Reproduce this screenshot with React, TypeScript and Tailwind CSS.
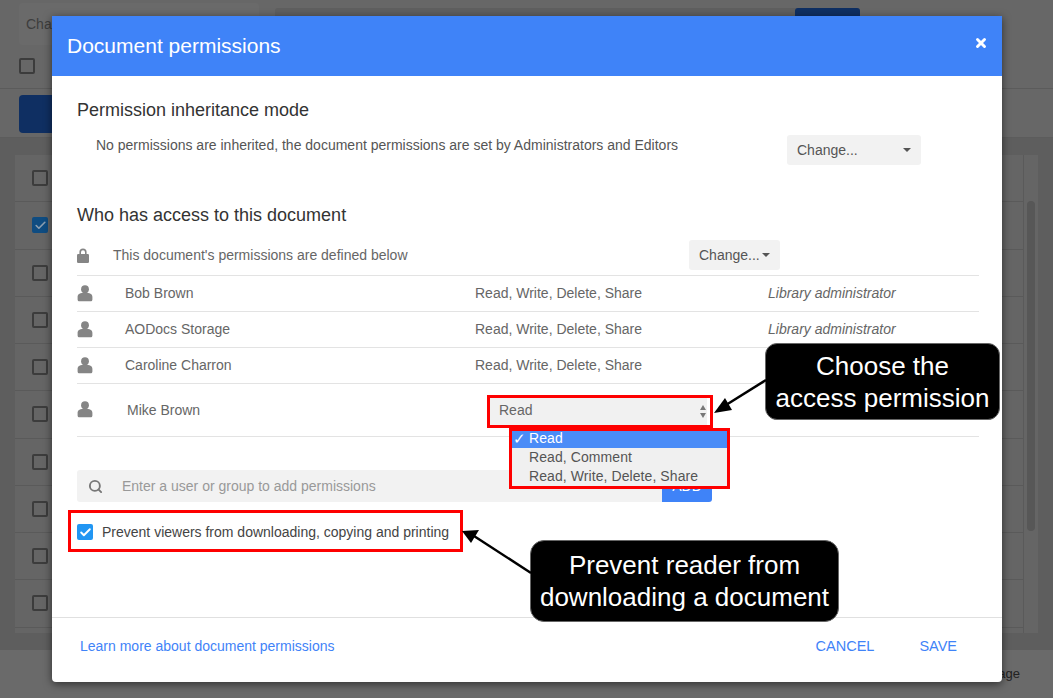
import { Check, Search, X } from "lucide-react";

const FONT = "font-['Liberation_Sans',Arial,sans-serif]";

// ─── data ─────────────────────────────────────────────────────────────────────

const people = [
  { name: "Bob Brown", perms: "Read, Write, Delete, Share", role: "Library administrator" },
  { name: "AODocs Storage", perms: "Read, Write, Delete, Share", role: "Library administrator" },
  { name: "Caroline Charron", perms: "Read, Write, Delete, Share", role: "" },
];

const backgroundRows = [false, true, false, false, false, false, false, false, false, false];

// ─── small pieces ─────────────────────────────────────────────────────────────

function Caret() {
  return <span className="h-0 w-0 border-x-[4px] border-t-[4px] border-x-transparent border-t-[#555]" />;
}

function PersonIcon() {
  return (
    <svg width="16" height="17" viewBox="0 0 16 17" className="shrink-0 fill-[#858585]">
      <circle cx="8" cy="4.2" r="3.9" />
      <path d="M0.6 12c0-3 2.6-4.3 7.4-4.3s7.4 1.3 7.4 4.3v2.4c0 1.2-.8 1.9-2 1.9H2.6c-1.2 0-2-.7-2-1.9z" />
    </svg>
  );
}

function LockIcon() {
  return (
    <svg width="12" height="15" viewBox="0 0 12 15" className="fill-[#858585]">
      <path d="M2.4 6.5V4.1a3.6 3.6 0 0 1 7.2 0v2.4H8V4.2a2 2 0 0 0-4 0v2.3z" />
      <rect x="0" y="6" width="12" height="9" rx="1.2" />
    </svg>
  );
}

function BgCheckbox({ checked }: { checked?: boolean }) {
  return checked ? (
    <span className="flex h-4 w-4 items-center justify-center rounded-[2px] bg-[#0f4c81]">
      <Check size={13} strokeWidth={3} className="text-[#8d9fb0]" />
    </span>
  ) : (
    <span className="block h-4 w-4 rounded-[2px] border-2 border-[#3c3c3c]" />
  );
}

// ─── dimmed page behind the dialog ────────────────────────────────────────────

function Background() {
  return (
    <div className="flex h-[698px] flex-col bg-[#676767]">
      <div className="h-[138px] shrink-0 border-b border-[#5c5c5c]">
        <div className="flex h-[89px] flex-col border-b border-[#5b5b5b] pl-[19px]">
          <div className="mt-[3px] flex items-start gap-[16px]">
            <div className="flex h-[42px] w-[240px] items-center rounded-[3px] bg-[#6a6a6a] pl-[7px] text-[14px] text-[#3d3d3d]">
              Change
            </div>
            <div className="mt-[5px] flex h-[37px] w-[585px] justify-end rounded-[3px] bg-[#5f5f5f]">
              <span className="h-[37px] w-[65px] rounded-[3px] bg-[#0f2f62]" />
            </div>
          </div>
          <div className="mt-[13px]">
            <BgCheckbox />
          </div>
        </div>
        <div className="mt-[6px] ml-[19px] h-[38px] w-[80px] rounded-[4px] bg-[#0f2f62]" />
      </div>
      <div className="flex-1 bg-[#5e5e5e] px-[15px] pt-[17px]">
        <div className="flex h-[478px] overflow-hidden bg-[#656565]">
          <div className="flex-1">
            {backgroundRows.map((checked, i) => (
              <div key={i} className="flex h-[47.25px] items-center border-b border-[#5a5a5a] pl-[17px]">
                <BgCheckbox checked={checked} />
              </div>
            ))}
          </div>
          <div className="w-[15px] border-l border-[#5a5a5a] pt-[46px]">
            <div className="mx-auto h-[330px] w-[8px] rounded-full bg-[#575757]" />
          </div>
        </div>
      </div>
      <div className="flex h-[48px] shrink-0 items-center justify-end bg-[#6a6a6a] pr-[33px] text-[13px] text-[#222]">
        age
      </div>
    </div>
  );
}

// ─── dialog ───────────────────────────────────────────────────────────────────

function Dialog() {
  return (
    <div className="absolute top-[16px] left-[52px] flex h-[666px] w-[950px] flex-col rounded-b-[4px] bg-white shadow-[0_2px_8px_rgba(0,0,0,0.55)]">
      <div className="flex h-[60px] shrink-0 items-center justify-between bg-[#3f83f8] pr-[14px] pl-[15px] text-white">
        <span className="text-[21px]">Document permissions</span>
        <X size={14} strokeWidth={5} className="mb-[6px]" />
      </div>

      <div className="flex-1 pr-[23px] pl-[25px]">
        <h2 className="mt-[23px] text-[18px] leading-[22px] text-[#333]">Permission inheritance mode</h2>
        <div className="mt-[14px] flex items-start">
          <p className="ml-[19px] w-[691px] text-[14px] leading-[20px] text-[#555]">
            No permissions are inherited, the document permissions are set by Administrators and Editors
          </p>
          <button className="flex h-[30px] w-[134px] items-center justify-between rounded-[3px] bg-[#f2f2f2] pr-[10px] pl-[10px] text-[14px] text-[#555]">
            Change...
            <Caret />
          </button>
        </div>

        <h2 className="mt-[39px] text-[18px] leading-[22px] text-[#333]">Who has access to this document</h2>

        <div className="mt-[14px] flex h-[36px] items-start border-b border-[#e3e3e3]">
          <div className="flex h-[30px] w-[36px] items-center">
            <LockIcon />
          </div>
          <span className="flex h-[30px] w-[576px] items-center text-[14px] text-[#666]">
            This document's permissions are defined below
          </span>
          <button className="flex h-[30px] w-[91px] items-center justify-between rounded-[3px] bg-[#f2f2f2] pr-[10px] pl-[10px] text-[14px] text-[#555]">
            Change...
            <Caret />
          </button>
        </div>

        {people.map((p) => (
          <div key={p.name} className="flex h-[36px] items-center border-b border-[#e3e3e3] text-[14px] text-[#666]">
            <span className="w-[48px]">
              <PersonIcon />
            </span>
            <span className="w-[350px]">{p.name}</span>
            <span className="w-[293px]">{p.perms}</span>
            <span className="italic">{p.role}</span>
          </div>
        ))}

        <div className="relative flex h-[53px] items-center border-b border-[#e3e3e3] text-[14px] text-[#666]">
          <span className="mb-[2px] w-[50px]">
            <PersonIcon />
          </span>
          <span className="w-[360px]">Mike Brown</span>
          <div className="mt-[2px] flex h-[27px] w-[220px] items-center justify-between bg-[#f1f1f1] pr-[1px] pl-[12px] text-[#666]">
            <span className="-mt-[2px]">Read</span>
            <span className="flex flex-col gap-[3px]">
              <span className="h-0 w-0 border-x-[3.5px] border-b-[5px] border-x-transparent border-b-[#777]" />
              <span className="h-0 w-0 border-x-[3.5px] border-t-[5px] border-x-transparent border-t-[#777]" />
            </span>
          </div>
          <div className="absolute top-[11px] left-[410px] h-[33px] w-[226px] border-[3px] border-[#fe0000]" />
        </div>

        <div className="mt-[33px] flex h-[32px]">
          <div className="flex flex-1 items-center rounded-l-[3px] bg-[#f2f2f2] pl-[11px] text-[14px] text-[#999]">
            <Search size={15} strokeWidth={3} className="mr-[19px] text-[#777]" />
            Enter a user or group to add permissions
          </div>
          <button className="flex w-[50px] items-center justify-center rounded-br-[3px] bg-[#3f83f8] text-[14px] text-white">
            ADD
          </button>
          <div className="w-[267px]" />
        </div>

        <div className="mt-[22px] flex items-center">
          <span className="flex h-4 w-4 items-center justify-center rounded-[2px] bg-[#2196f3]">
            <Check size={13} strokeWidth={3.5} className="text-white" />
          </span>
          <span className="ml-[9px] text-[14px] leading-[16px] text-[#444]">
            Prevent viewers from downloading, copying and printing
          </span>
        </div>
      </div>

      <div className="flex h-[65px] shrink-0 items-center justify-between border-t border-[#e0e0e0] pr-[45px] pb-[7px] pl-[28px] text-[14px] text-[#3f83f8]">
        <a>Learn more about document permissions</a>
        <div className="flex gap-[45px] text-[14.5px]">
          <span>CANCEL</span>
          <span>SAVE</span>
        </div>
      </div>
    </div>
  );
}

// ─── annotations drawn over the screenshot ────────────────────────────────────

function Annotations() {
  return (
    <>
      <div className="absolute top-[428px] left-[509px] h-[61px] w-[221px] border-[3px] border-[#fe0000] bg-[#f0f0f0] text-[14px] leading-[19px] tracking-[0.08px] text-[#555]">
        <div className="relative flex h-[17px] items-center bg-[#4a8cf7] pb-[2px] pl-[17px] text-white">
          <span className="absolute left-[1px] text-[15px]">✓</span>
          Read
        </div>
        <div className="pl-[17px]">Read, Comment</div>
        <div className="pl-[17px]">Read, Write, Delete, Share</div>
      </div>

      <div className="absolute top-[510px] left-[68px] h-[42px] w-[395px] border-[3px] border-[#fe0000]" />

      <div className="absolute top-[343px] left-[765px] flex h-[77px] w-[235px] flex-col items-center justify-center rounded-[12px] border border-[#666] bg-black text-[26px] leading-[32px] text-white">
        <span>Choose the</span>
        <span>access permission</span>
      </div>

      <div className="absolute top-[540px] left-[530px] flex h-[82px] w-[309px] flex-col items-center justify-center rounded-[14px] border border-[#666] bg-black text-[26px] leading-[32px] text-white">
        <span>Prevent reader from</span>
        <span>downloading a document</span>
      </div>

      <svg className="absolute top-0 left-0" width="1053" height="698" viewBox="0 0 1053 698">
        <line x1="766" y1="380" x2="726" y2="405" stroke="#000" strokeWidth="2.5" />
        <polygon points="714,413 725,398 732,410" fill="#000" />
        <line x1="531" y1="573" x2="474" y2="536" stroke="#000" strokeWidth="2.5" />
        <polygon points="462,531 479,530 471,543" fill="#000" />
      </svg>
    </>
  );
}

export default function App() {
  return (
    <div className={`relative h-[698px] w-[1053px] overflow-hidden ${FONT}`}>
      <Background />
      <Dialog />
      <Annotations />
    </div>
  );
}
